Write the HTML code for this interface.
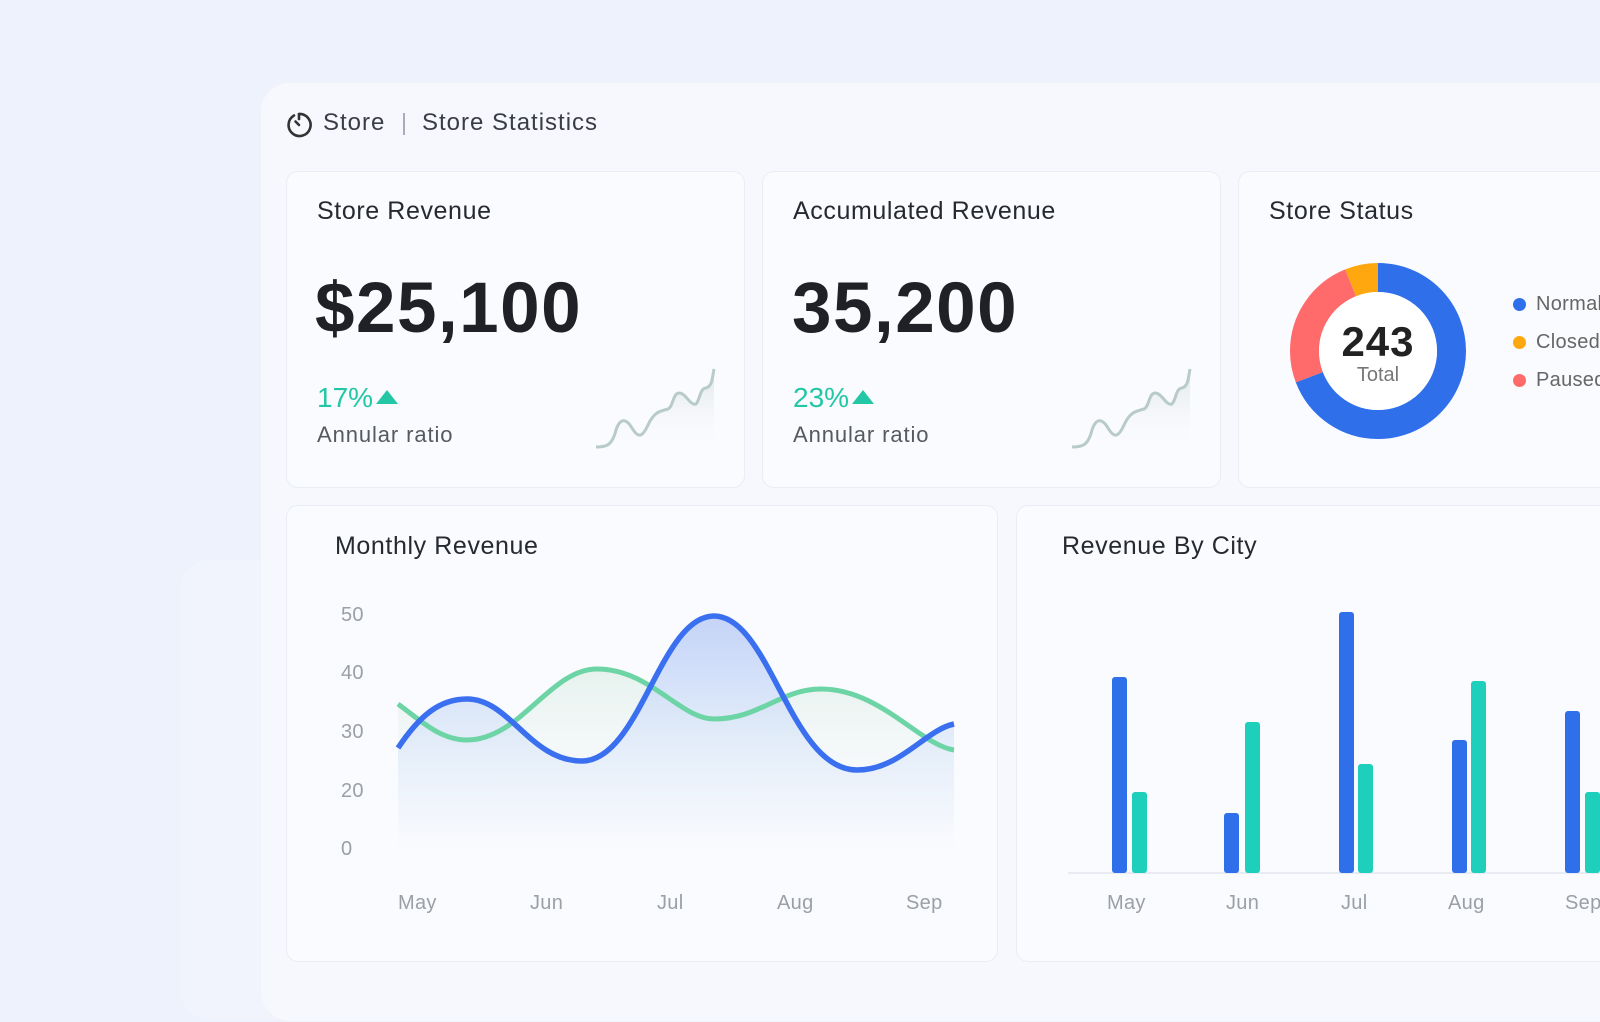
<!DOCTYPE html>
<html><head><meta charset="utf-8"><style>
*{margin:0;padding:0;box-sizing:border-box}
body{width:1600px;height:1004px;overflow:hidden;background:#eef2fc;font-family:"Liberation Sans",sans-serif;position:relative}
.ghost{position:absolute;left:180px;top:560px;width:200px;height:460px;border-radius:30px;background:#f1f4fc}
.panel{position:absolute;left:260px;top:82px;width:1400px;height:940px;border-radius:30px;background:#f6f8fd;border:1px solid #f0f3fa}
.card{position:absolute;background:#fafbfe;border:1px solid #e8eef3;border-radius:12px}
.t{position:absolute;font-size:25px;color:#262a30;white-space:nowrap;letter-spacing:0.6px}
.big{position:absolute;font-size:71px;font-weight:bold;color:#1f2126;letter-spacing:1.5px}
.pct{position:absolute;font-size:28px;color:#23c7a6}
.ar{position:absolute;font-size:22px;color:#555a60;letter-spacing:0.9px}
.ax{position:absolute;font-size:20px;color:#9aa0a6;letter-spacing:0.3px}
</style></head><body>
<div class="ghost"></div>
<div class="panel"></div>
<svg style="position:absolute;left:284px;top:110px" width="30" height="30" viewBox="0 0 30 30"><path d="M10 5.5 A11 11 0 1 0 15 4" fill="none" stroke="#333" stroke-width="2.6" stroke-linecap="round"/><path d="M15 4 V9 M15 15 L11.5 11.5" stroke="#333" stroke-width="2.6" stroke-linecap="round"/></svg>
<div class="t" style="left:323px;top:109px;font-size:24px;color:#3a3e44;letter-spacing:1px">Store</div>
<div style="position:absolute;left:403px;top:113px;width:2px;height:22px;background:#aab"></div>
<div class="t" style="left:422px;top:109px;font-size:24px;color:#3a3e44;letter-spacing:1px">Store Statistics</div>

<div class="card" style="left:286px;top:171px;width:459px;height:317px"></div>
<div class="card" style="left:762px;top:171px;width:459px;height:317px"></div>
<div class="card" style="left:1238px;top:171px;width:400px;height:317px"></div>
<div class="card" style="left:286px;top:505px;width:712px;height:457px"></div>
<div class="card" style="left:1016px;top:505px;width:620px;height:457px"></div>

<div class="t" style="left:317px;top:197px">Store Revenue</div>
<div class="big" style="left:315px;top:268px">$25,100</div>
<div class="pct" style="left:317px;top:382px">17%<span style="display:inline-block;width:0;height:0;border-left:11px solid transparent;border-right:11px solid transparent;border-bottom:14px solid #23c7a6;margin-left:3px;vertical-align:3px"></span></div>
<div class="ar" style="left:317px;top:422px">Annular ratio</div>

<div class="t" style="left:793px;top:197px">Accumulated Revenue</div>
<div class="big" style="left:792px;top:268px">35,200</div>
<div class="pct" style="left:793px;top:382px">23%<span style="display:inline-block;width:0;height:0;border-left:11px solid transparent;border-right:11px solid transparent;border-bottom:14px solid #23c7a6;margin-left:3px;vertical-align:3px"></span></div>
<div class="ar" style="left:793px;top:422px">Annular ratio</div>

<svg style="position:absolute;left:0;top:0" width="1600" height="1004">
<defs>
<linearGradient id="sp" x1="0" y1="0" x2="0" y2="1"><stop offset="0" stop-color="#dfe6e6"/><stop offset="1" stop-color="#fafbfe" stop-opacity="0"/></linearGradient>
<linearGradient id="bf" x1="0" y1="0" x2="0" y2="1"><stop offset="0" stop-color="#b7caf7"/><stop offset="0.5" stop-color="#dce8f8"/><stop offset="1" stop-color="#fafbfe"/></linearGradient>
<linearGradient id="gf" x1="0" y1="0" x2="0" y2="1"><stop offset="0" stop-color="#e6f2ee"/><stop offset="1" stop-color="#fafbfe" stop-opacity="0"/></linearGradient>
</defs>
<g id="spk">
<path d="M596,447 C606,447 612,446 616,430 C620,418 626,418 632,428 C638,438 642,438 648,425 C654,412 660,411 668,409 C673,407 673,393 679,393 C686,393 690,406 696,404 C700,400 700,388 706,388 C712,386 712,380 714,369 L714,450 L596,450 Z" fill="url(#sp)"/>
<path d="M596,447 C606,447 612,446 616,430 C620,418 626,418 632,428 C638,438 642,438 648,425 C654,412 660,411 668,409 C673,407 673,393 679,393 C686,393 690,406 696,404 C700,400 700,388 706,388 C712,386 712,380 714,369" fill="none" stroke="#b8cbc6" stroke-width="3"/>
</g>
<use href="#spk" transform="translate(476,0)"/>

<path d="M398,704 C420,720 440,740 467,740 C520,740 550,669 597,669 C650,669 680,719 714,719 C760,719 780,689 821,689 C880,689 920,745 954,750 L954,850 L398,850 Z" fill="url(#gf)"/>
<path d="M398,748 C420,715 440,699 467,699 C510,699 530,761 582,761 C640,761 660,616 714,616 C770,616 790,770 857,770 C900,770 925,730 954,724 L954,850 L398,850 Z" fill="url(#bf)" opacity="0.8"/>
<path d="M398,704 C420,720 440,740 467,740 C520,740 550,669 597,669 C650,669 680,719 714,719 C760,719 780,689 821,689 C880,689 920,745 954,750" fill="none" stroke="#6dd4a6" stroke-width="5"/>
<path d="M398,748 C420,715 440,699 467,699 C510,699 530,761 582,761 C640,761 660,616 714,616 C770,616 790,770 857,770 C900,770 925,730 954,724" fill="none" stroke="#3a6ff0" stroke-width="5.5"/>

<line x1="1068" y1="873" x2="1600" y2="873" stroke="#e2e8ee" stroke-width="1.5"/>
<g fill="#2f6fea">
<rect x="1112" y="677" width="15" height="196" rx="3"/>
<rect x="1224" y="813" width="15" height="60" rx="3"/>
<rect x="1339" y="612" width="15" height="261" rx="3"/>
<rect x="1452" y="740" width="15" height="133" rx="3"/>
<rect x="1565" y="711" width="15" height="162" rx="3"/>
</g>
<g fill="#1ecfbb">
<rect x="1132" y="792" width="15" height="81" rx="3"/>
<rect x="1245" y="722" width="15" height="151" rx="3"/>
<rect x="1358" y="764" width="15" height="109" rx="3"/>
<rect x="1471" y="681" width="15" height="192" rx="3"/>
<rect x="1585" y="792" width="15" height="81" rx="3"/>
</g>

<g transform="translate(1378,351) rotate(-90)" fill="none" stroke-width="29">
<circle r="73.5" stroke="#2f6fea" stroke-dasharray="319.4 461.8"/>
<circle r="73.5" stroke="#ff6b6b" stroke-dasharray="0 319.4 114.2 461.8"/>
<circle r="73.5" stroke="#ffa70f" stroke-dasharray="0 433.6 28.2 461.8"/>
</g>
<circle cx="1378" cy="351" r="59" fill="#fff"/>
</svg>

<div class="t" style="left:1269px;top:197px">Store Status</div>
<div style="position:absolute;left:1318px;top:320px;width:120px;text-align:center;font-size:42px;font-weight:bold;color:#222;line-height:44px;letter-spacing:1px">243</div>
<div style="position:absolute;left:1318px;top:364px;width:120px;text-align:center;font-size:20px;color:#777">Total</div>
<div style="position:absolute;left:1513px;top:298px;width:13px;height:13px;border-radius:50%;background:#2f6fea"></div>
<div style="position:absolute;left:1513px;top:336px;width:13px;height:13px;border-radius:50%;background:#ffa70f"></div>
<div style="position:absolute;left:1513px;top:374px;width:13px;height:13px;border-radius:50%;background:#ff6b6b"></div>
<div class="ax" style="left:1536px;top:293px;color:#666">Normal</div>
<div class="ax" style="left:1536px;top:331px;color:#666">Closed</div>
<div class="ax" style="left:1536px;top:369px;color:#666">Paused</div>

<div class="t" style="left:335px;top:532px">Monthly Revenue</div>
<div class="ax" style="left:341px;top:604px">50</div>
<div class="ax" style="left:341px;top:662px">40</div>
<div class="ax" style="left:341px;top:721px">30</div>
<div class="ax" style="left:341px;top:780px">20</div>
<div class="ax" style="left:341px;top:838px">0</div>
<div class="ax" style="left:398px;top:892px">May</div>
<div class="ax" style="left:530px;top:892px">Jun</div>
<div class="ax" style="left:657px;top:892px">Jul</div>
<div class="ax" style="left:777px;top:892px">Aug</div>
<div class="ax" style="left:906px;top:892px">Sep</div>

<div class="t" style="left:1062px;top:532px">Revenue By City</div>
<div class="ax" style="left:1107px;top:892px">May</div>
<div class="ax" style="left:1226px;top:892px">Jun</div>
<div class="ax" style="left:1341px;top:892px">Jul</div>
<div class="ax" style="left:1448px;top:892px">Aug</div>
<div class="ax" style="left:1565px;top:892px">Sep</div>
</body></html>
